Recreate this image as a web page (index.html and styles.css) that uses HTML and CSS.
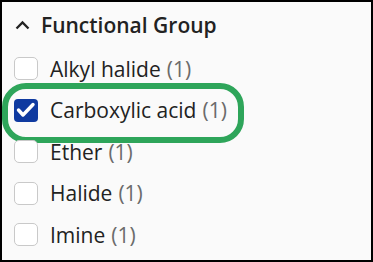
FILE: index.html
```html
<!DOCTYPE html>
<html lang="en">
<head>
    <meta charset="UTF-8">
    <meta name="viewport" content="width=device-width, initial-scale=1.0">
    <title>Functional Group</title>
    <link rel="stylesheet" href="styles.css">
</head>
<body>
    <div class="panel">
        <div class="group-head">
            <svg class="chevron" width="16" height="10" viewBox="0 0 16 10">
                <polyline points="1.5,8.5 7.5,2.5 13.5,8.5" fill="none" stroke="#222" stroke-width="2.3"/>
            </svg>
            <span class="group-title">Functional Group</span>
        </div>
        <ul class="options">
            <li class="option">
                <span class="box"></span>
                <span class="label">Alkyl halide</span>
                <span class="count">(1)</span>
            </li>
            <li class="option highlight">
                <span class="box checked">
                    <svg width="24" height="23" viewBox="0 0 24 23">
                        <polyline points="4.5,11 9,16 19,5.5" fill="none" stroke="#fff" stroke-width="3.4" stroke-linecap="round" stroke-linejoin="round"/>
                    </svg>
                </span>
                <span class="label">Carboxylic acid</span>
                <span class="count">(1)</span>
            </li>
            <li class="option">
                <span class="box"></span>
                <span class="label">Ether</span>
                <span class="count">(1)</span>
            </li>
            <li class="option">
                <span class="box"></span>
                <span class="label">Halide</span>
                <span class="count">(1)</span>
            </li>
            <li class="option">
                <span class="box"></span>
                <span class="label">Imine</span>
                <span class="count">(1)</span>
            </li>
        </ul>
    </div>
</body>
</html>
```

FILE: styles.css
```css
body {
    margin: 0;
    font-family: "Open Sans", sans-serif;
}

.panel {
    width: 373px;
    height: 262px;
    box-sizing: border-box;
    border: 2px solid #000;
    background-color: #fafafa;
    overflow: hidden;
}

.group-head {
    display: flex;
    align-items: center;
    height: 46px;
    padding-left: 13px;
}

.chevron {
    margin-right: 10px;
}

.group-title {
    font-size: 21px;
    font-weight: 600;
    color: #222;
}

.options {
    list-style: none;
    margin: 0;
    padding: 0 0 0 12px;
}

.option {
    position: relative;
    display: flex;
    align-items: center;
    height: 41.5px;
    font-size: 21px;
    color: #222;
}

.box {
    width: 24px;
    height: 23px;
    box-sizing: border-box;
    border: 1.5px solid #c9c9c9;
    border-radius: 5px;
    background: #fff;
    margin-right: 12px;
    flex-shrink: 0;
}

.box.checked {
    border: none;
    border-radius: 4px;
    background-color: #0f3aa0;
}

.box svg {
    display: block;
}

.count {
    color: #6b6b6b;
    margin-left: 6px;
}

.highlight::after {
    content: "";
    position: absolute;
    left: -12px;
    top: -7px;
    width: 230px;
    height: 48px;
    border: 6.5px solid #2ea55a;
    border-radius: 24px;
}
```
